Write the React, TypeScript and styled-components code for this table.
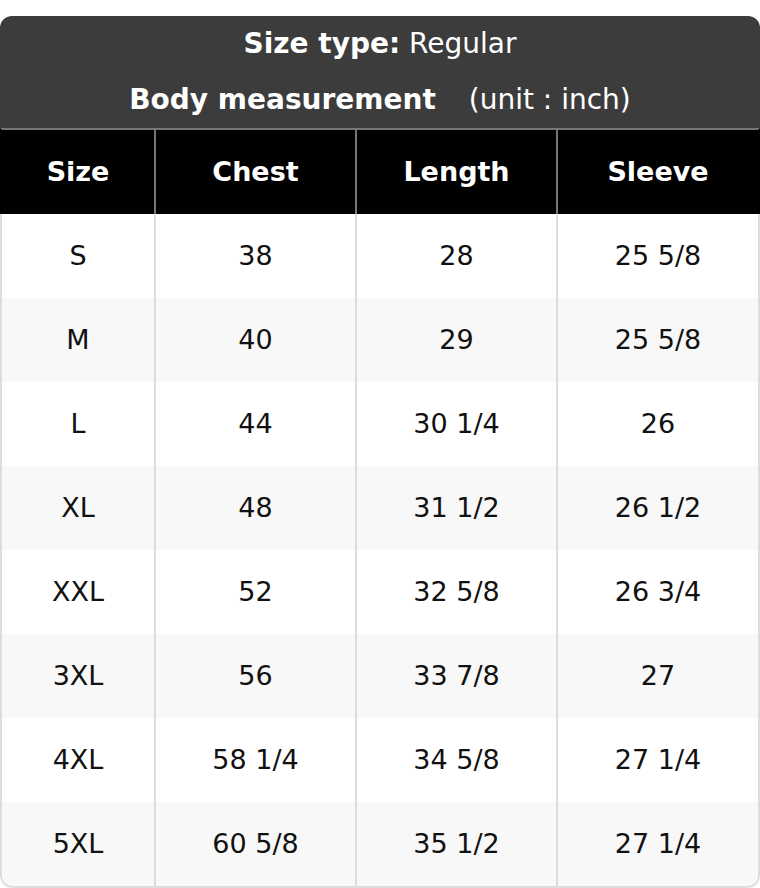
import React from "react";
import styled, { createGlobalStyle } from "styled-components";

const GlobalStyle = createGlobalStyle`
  html, body { margin: 0; padding: 0; background: #ffffff; }
  body { padding-top: 16px; font-family: "DejaVu Sans", "Liberation Sans", sans-serif; }
`;

const Card = styled.div`
  width: 760px;
  border-radius: 12px;
  overflow: hidden;
  background: #ffffff;
`;

const TitleBlock = styled.div`
  background: #3c3c3c;
  color: #ffffff;
  text-align: center;
  font-size: 28px;
`;

const TitleLine = styled.div`
  height: 56px;
  line-height: 56px;
  white-space: pre;
`;

const Strong = styled.span`
  font-weight: 700;
`;

const Unit = styled.span`
  margin-left: 24px;
`;

const COLS = "152px 199px 199px 200px";

const HeaderRow = styled.div`
  display: grid;
  grid-template-columns: ${COLS};
  column-gap: 2px;
  border-top: 2px solid #757575;
  border-left: 2px solid #000;
  border-right: 2px solid #000;
  background: #757575;
`;

const HeadCell = styled.div`
  height: 84px;
  box-sizing: border-box;
  padding-bottom: 2px;
  display: flex;
  align-items: center;
  justify-content: center;
  background: #000000;
  color: #ffffff;
  font-weight: 700;
  font-size: 27px;
`;

const Body = styled.div`
  border: 2px solid #dddddd;
  border-top: none;
  border-radius: 0 0 12px 12px;
  overflow: hidden;
  background: #dddddd;
  display: flex;
  flex-direction: column;
`;

const Row = styled.div<{ $alt: boolean }>`
  display: grid;
  grid-template-columns: ${COLS};
  column-gap: 2px;
  & > div {
    background: ${(p) => (p.$alt ? "#f8f8f8" : "#ffffff")};
  }
`;

const Cell = styled.div`
  height: 84px;
  box-sizing: border-box;
  padding-bottom: 2px;
  display: flex;
  align-items: center;
  justify-content: center;
  color: #111111;
  font-size: 27px;
`;

const headers = ["Size", "Chest", "Length", "Sleeve"];
const rows: string[][] = [
  ["S", "38", "28", "25 5/8"],
  ["M", "40", "29", "25 5/8"],
  ["L", "44", "30 1/4", "26"],
  ["XL", "48", "31 1/2", "26 1/2"],
  ["XXL", "52", "32 5/8", "26 3/4"],
  ["3XL", "56", "33 7/8", "27"],
  ["4XL", "58 1/4", "34 5/8", "27 1/4"],
  ["5XL", "60 5/8", "35 1/2", "27 1/4"],
];

export default function App() {
  return (
    <>
      <GlobalStyle />
      <Card>
        <TitleBlock>
          <TitleLine>
            <Strong>Size type:</Strong> Regular
          </TitleLine>
          <TitleLine>
            <Strong>Body measurement</Strong> <Unit>(unit : inch)</Unit>
          </TitleLine>
        </TitleBlock>
        <HeaderRow>
          {headers.map((h) => (
            <HeadCell key={h}>{h}</HeadCell>
          ))}
        </HeaderRow>
        <Body>
          {rows.map((r, i) => (
            <Row key={r[0]} $alt={i % 2 === 1}>
              {r.map((c, j) => (
                <Cell key={j}>{c}</Cell>
              ))}
            </Row>
          ))}
        </Body>
      </Card>
    </>
  );
}
